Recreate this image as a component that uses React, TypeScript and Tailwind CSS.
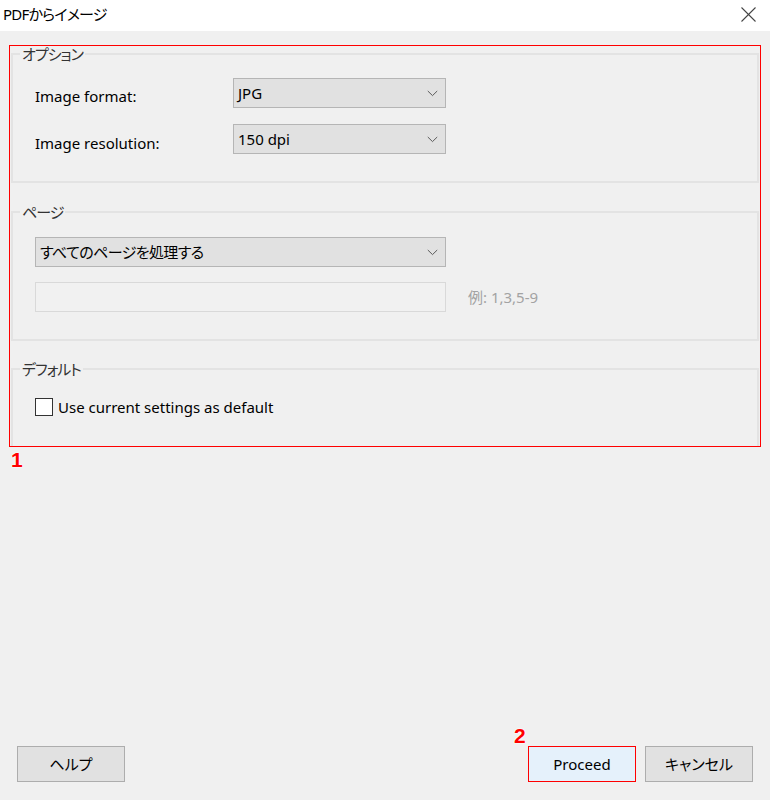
import React from "react";

function Chevron() {
  return (
    <svg width="11" height="7" viewBox="0 0 11 7" fill="none">
      <polyline points="0.8,1 5.5,5.6 10.2,1" stroke="#5a5a5a" strokeWidth="1" />
    </svg>
  );
}

function Select({ value, w, jp }: { value: string; w: string; jp?: boolean }) {
  return (
    <div
      className={`${w} h-[30px] flex items-center justify-between border border-[#b5b5b5] bg-[#e1e1e1] pl-[4px] pr-[7px] text-[15px] text-black`}
    >
      <span className={jp ? "tracking-[-0.6px]" : ""}>{value}</span>
      <Chevron />
    </div>
  );
}

function NumLabel({ n }: { n: string }) {
  return (
    <span className="font-['Liberation_Sans',Arial,sans-serif] font-bold text-[21px] leading-[21px] text-[#ff0000] [text-shadow:0_0_2px_#fff,0_0_2px_#fff,0_0_1px_#fff]">
      {n}
    </span>
  );
}

function Legend({ text }: { text: string }) {
  return (
    <legend className="ml-[7px] px-[2px] text-[15px] leading-[16px] tracking-[-1px] text-[#333]">{text}</legend>
  );
}

export default function App() {
  return (
    <div className="w-[770px] h-[800px] bg-[#f0f0f0] flex flex-col font-['Noto_Sans','Noto_Sans_CJK_JP',sans-serif] [font-feature-settings:'palt'] text-black">
      {/* Title bar */}
      <div className="h-[31px] bg-white flex items-center justify-between pl-[3px] pr-[14px] shrink-0">
        <span className="text-[15px] leading-[20px] tracking-[-0.8px] -mt-[3px]">PDFからイメージ</span>
        <svg width="15" height="15" viewBox="0 0 15 15" className="-mt-[3px]">
          <line x1="0.5" y1="0.5" x2="14.5" y2="14.5" stroke="#444" strokeWidth="1.1" />
          <line x1="14.5" y1="0.5" x2="0.5" y2="14.5" stroke="#444" strokeWidth="1.1" />
        </svg>
      </div>

      {/* Annotated settings area */}
      <div className="mt-[14px] ml-[9px] w-[752px] h-[402px] border border-[#ff0000] px-[1px] flex flex-col shrink-0">
        <fieldset className="border-2 border-[#e3e3e3] h-[137px]">
          <Legend text="オプション" />
          <div className="px-[22px] pt-[16px] flex flex-col gap-[16px]">
            <div className="flex items-start">
              <span className="w-[198px] pt-[8px] text-[15px] leading-[20px]">Image format:</span>
              <Select value="JPG" w="w-[213px]" />
            </div>
            <div className="flex items-start">
              <span className="w-[198px] pt-[9px] text-[15px] leading-[20px]">Image resolution:</span>
              <Select value="150 dpi" w="w-[213px]" />
            </div>
          </div>
        </fieldset>

        <fieldset className="border-2 border-[#e3e3e3] h-[137px] mt-[21px]">
          <Legend text="ページ" />
          <div className="px-[22px] pt-[17px] flex flex-col gap-[15px]">
            <Select value="すべてのページを処理する" w="w-[411px]" jp />
            <div className="flex items-center">
              <div className="w-[411px] h-[30px] border border-[#d9d9d9] bg-[#f1f1f1]" />
              <span className="ml-[22px] text-[15px] text-[#a3a3a3]">例: 1,3,5-9</span>
            </div>
          </div>
        </fieldset>

        <fieldset className="border-2 border-b-0 border-[#e3e3e3] h-[85px] mt-[20px]">
          <Legend text="デフォルト" />
          <div className="px-[22px] pt-[20px] flex items-center">
            <div className="w-[18px] h-[18px] border border-[#333] bg-white" />
            <span className="ml-[5px] text-[15px] leading-[20px]">Use current settings as default</span>
          </div>
        </fieldset>
      </div>

      <div className="ml-[11px] mt-[2px] shrink-0">
        <NumLabel n="1" />
      </div>

      <div className="flex-1" />

      {/* Bottom buttons */}
      <div className="flex items-end px-[17px] pb-[18px] shrink-0">
        <button className="w-[108px] h-[36px] border border-[#adadad] bg-[#e1e1e1] text-[15px]">
          ヘルプ
        </button>
        <div className="flex-1" />
        <div className="relative">
          <div className="absolute left-[-14px] top-[-21px]">
            <NumLabel n="2" />
          </div>
          <button className="w-[108px] h-[36px] border border-[#ff0000] bg-[#e5f1fb] text-[15px]">
            Proceed
          </button>
        </div>
        <button className="ml-[9px] w-[108px] h-[36px] border border-[#adadad] bg-[#e1e1e1] text-[15px]">
          キャンセル
        </button>
      </div>
    </div>
  );
}
